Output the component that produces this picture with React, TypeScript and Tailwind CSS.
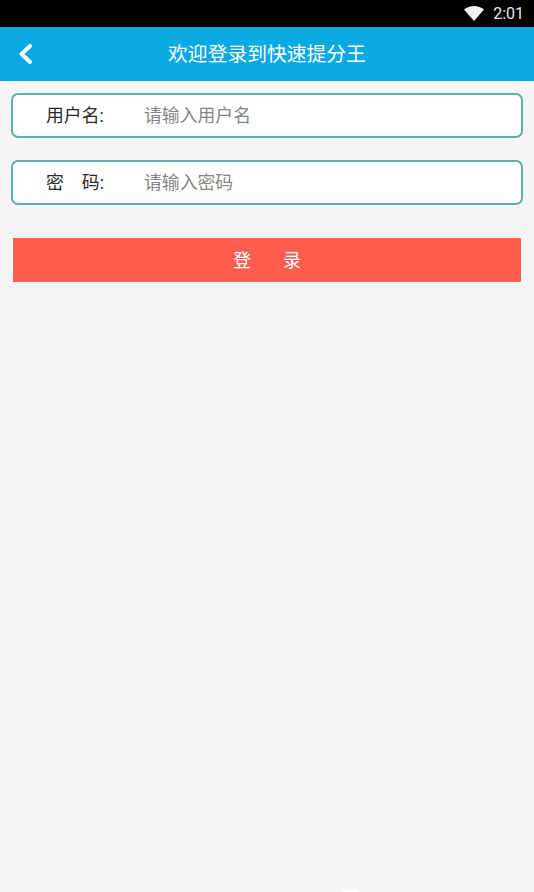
const cjk = "font-['Roboto','Noto_Sans_CJK_SC',sans-serif]";

function Field({ label, hint, type = "text" }: { label: React.ReactNode; hint: string; type?: string }) {
  return (
    <div className="mx-[11px] flex h-[45px] items-center rounded-[7px] border-2 border-[#5cb0a4] bg-white pt-[2px]">
      <div className="ml-[33px] flex w-[58px] justify-between text-[17.85px] text-[#2a2a2a]">{label}</div>
      <input
        type={type}
        placeholder={hint}
        className="ml-[40px] min-w-0 flex-1 bg-transparent text-[17.85px] text-[#2a2a2a] outline-none placeholder:text-[#858585]"
      />
    </div>
  );
}

export default function App() {
  return (
    <div className={`relative flex h-[892px] w-[534px] flex-col overflow-hidden bg-[#f5f5f5] ${cjk}`}>
      {/* status bar */}
      <div className="flex h-[27px] items-center justify-end bg-black pr-[10px]">
        <svg width="20" height="15" viewBox="0 0 20 15" className="mr-[9px]">
          <path d="M0 3.500C2.800 1.200 6.200 0 10 0s7.200 1.200 10 3.500L10 15z" fill="#f2f2f2" />
        </svg>
        <span className="text-[16px] text-[#e8e8e8]">2:01</span>
      </div>

      {/* header */}
      <div className="relative flex h-[54px] items-center justify-center bg-[#0aa9e3] pt-[1px]">
        <svg width="16" height="22" viewBox="0 0 16 22" className="absolute left-[18px] top-[16px]">
          <path d="M12 3 3.500 11 12 19" fill="none" stroke="white" strokeWidth="4" strokeLinecap="round" strokeLinejoin="round" />
        </svg>
        <span className="text-[19.8px] text-white">欢迎登录到快速提分王</span>
      </div>

      <div className="mt-[12px] flex flex-col gap-[22px]">
        <Field label={<span>用户名:</span>} hint="请输入用户名" />
        <Field label={<><span>密</span><span>码:</span></>} hint="请输入密码" type="password" />
      </div>

      <button className="mx-[13px] mt-[33px] flex h-[44px] items-center justify-center gap-[32px] bg-[#ff5c50] text-[18px] text-white">
        <span>登</span>
        <span>录</span>
      </button>

      {/* faint mark at the bottom edge */}
      <div className="absolute bottom-0 left-[343px] h-[3px] w-[16px] rounded-t-full bg-white/70" />
    </div>
  );
}
